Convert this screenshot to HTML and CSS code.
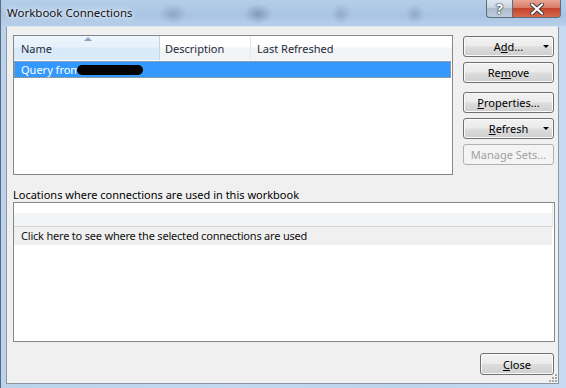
FILE: index.html
```html
<!DOCTYPE html>
<html lang="en">
  <head>
    <meta charset="UTF-8" />
    <title>Workbook Connections</title>
    <link rel="stylesheet" href="styles.css">
  </head>
  <body>
    <div class="window">
      <div class="titlebar">
        <span class="title">Workbook Connections</span>
        <div class="caption-buttons">
          <div class="cap cap-help">?</div>
          <div class="cap cap-close">
            <svg width="14" height="12" viewBox="0 0 14 12">
              <path d="M2 1.5 L12 10.5 M12 1.5 L2 10.5" stroke="#3b3b3b" stroke-width="4" stroke-linecap="round" />
              <path d="M2 1.5 L12 10.5 M12 1.5 L2 10.5" stroke="#ffffff" stroke-width="2.2" stroke-linecap="round" />
            </svg>
          </div>
        </div>
      </div>
      <div class="client">
        <div class="top-row">
          <div class="conn-list">
            <div class="list-header">
              <div class="col col-name">Name<span class="sort-arrow"></span></div>
              <div class="col col-desc">Description</div>
              <div class="col col-refreshed">Last Refreshed</div>
            </div>
            <div class="list-row selected">Query from <span class="redact"></span></div>
          </div>
          <div class="side-buttons">
            <div class="btn split"><span class="btn-label">A<u>d</u>d...</span><span class="arrow"></span></div>
            <div class="btn">Re<u>m</u>ove</div>
            <div class="btn spaced"><u>P</u>roperties...</div>
            <div class="btn split"><span class="btn-label"><u>R</u>efresh</span><span class="arrow"></span></div>
            <div class="btn disabled">Manage Sets...</div>
          </div>
        </div>
        <div class="section-label">Locations where connections are used in this workbook</div>
        <div class="loc-list">
          <div class="loc-header"></div>
          <div class="loc-row">Click here to see where the selected connections are used</div>
        </div>
        <div class="footer">
          <div class="btn close-btn"><u>C</u>lose</div>
        </div>
        <svg class="grip" width="10" height="10" viewBox="0 0 10 10">
          <g fill="#a8a8a8">
            <rect x="8" y="2" width="2" height="2" />
            <rect x="5" y="5" width="2" height="2" />
            <rect x="8" y="5" width="2" height="2" />
            <rect x="2" y="8" width="2" height="2" />
            <rect x="5" y="8" width="2" height="2" />
            <rect x="8" y="8" width="2" height="2" />
          </g>
        </svg>
      </div>
    </div>
  </body>
</html>
```

FILE: styles.css
```css
* {
  margin: 0;
  padding: 0;
  box-sizing: border-box;
}
body {
  background-color: #bfd6ef;
  font-family: "Noto Sans", sans-serif;
  font-size: 11px;
  color: #000;
}
.window {
  width: 566px;
  height: 388px;
  display: flex;
  flex-direction: column;
  background: linear-gradient(90deg, #bad2ec 0%, #c3d8ef 40%, #bcd3ec 70%, #c6dbf1 100%);
  border-left: 1px solid #5a6a7c;
}
.titlebar {
  height: 26px;
  display: flex;
  align-items: flex-start;
  background:
    radial-gradient(ellipse 14px 10px at 172px 14px, rgba(90, 110, 140, 0.35), transparent),
    radial-gradient(ellipse 14px 10px at 257px 14px, rgba(70, 90, 120, 0.4), transparent),
    radial-gradient(ellipse 10px 10px at 340px 14px, rgba(90, 110, 140, 0.3), transparent),
    radial-gradient(ellipse 10px 10px at 414px 14px, rgba(90, 110, 140, 0.3), transparent),
    linear-gradient(180deg, #b4cde8 0%, #a9c4e3 60%, #b7cfea 100%);
}
.title {
  padding: 5px 0 0 6px;
  line-height: 16px;
  font-size: 11.5px;
  color: #111;
  text-shadow: 0 0 6px #e3eefa, 0 0 10px #e3eefa, 0 0 3px #eef5fc;
}
.caption-buttons {
  display: flex;
  margin-left: auto;
  margin-right: 5px;
}
.cap {
  height: 18px;
  display: flex;
  align-items: center;
  justify-content: center;
  border: 1px solid #5d6d7e;
  border-top: none;
}
.cap-help {
  width: 26px;
  border-right: none;
  border-radius: 0 0 0 4px;
  background: linear-gradient(180deg, #dfe8f2 0%, #c7d4e2 45%, #aebdcd 50%, #bcccdc 100%);
  color: #fff;
  font-weight: bold;
  font-size: 14px;
  line-height: 16px;
  text-shadow: 0 0 1px #333, 0 0 1px #333, 0 0 2px #444;
}
.cap-close {
  width: 49px;
  border-radius: 0 0 4px 0;
  background: linear-gradient(180deg, #e7a595 0%, #d87b66 45%, #c4432c 50%, #d66a4d 100%);
}
.client {
  position: relative;
  width: 553px;
  height: 358px;
  margin-left: 5px;
  background-color: #f0f0f0;
  border: 1px solid #8c97a3;
  border-top-color: #dfe6ee;
  padding: 8px 3px 8px 6px;
  display: flex;
  flex-direction: column;
}
.top-row {
  display: flex;
  gap: 10px;
  height: 140px;
}
.conn-list {
  width: 440px;
  height: 140px;
  border: 1px solid #828790;
  background-color: #fff;
}
.list-header {
  display: flex;
  height: 24px;
  background: linear-gradient(180deg, #ffffff 0%, #ffffff 45%, #f3f4f6 50%, #f2f3f5 100%);
}
.col {
  position: relative;
  border-right: 1px solid #e3e8ee;
  padding: 5px 0 0 7px;
  color: #1e2a38;
  line-height: 15px;
}
.col-name {
  width: 146px;
  background: linear-gradient(180deg, #edf5fc 0%, #e6f1fb 45%, #daeaf8 50%, #d9e9f8 100%);
  border-right-color: #bcd7ee;
}
.sort-arrow {
  position: absolute;
  left: 70px;
  top: 1px;
  border-left: 4px solid transparent;
  border-right: 4px solid transparent;
  border-bottom: 4px solid #8aa4bf;
}
.col-desc {
  width: 91px;
  padding-left: 5px;
}
.col-refreshed {
  flex: 1;
  border-right: none;
  padding-left: 6px;
}
.list-row {
  height: 17px;
  margin: 1px 1px 0 0;
  padding-left: 6px;
  line-height: 15px;
  display: flex;
  align-items: center;
}
.selected {
  background-color: #3399ff;
  color: #fff;
  border: 1px dotted #d8a060;
}
.redact {
  display: inline-block;
  width: 66px;
  height: 10px;
  margin-left: -4px;
  background-color: #000;
  border-radius: 5px;
}
.side-buttons {
  display: flex;
  flex-direction: column;
  gap: 5px;
  width: 91px;
  padding-top: 1px;
}
.btn {
  height: 21px;
  border: 1px solid #707070;
  border-radius: 3px;
  background: linear-gradient(180deg, #f2f2f2 0%, #ebebeb 48%, #dddddd 52%, #cfcfcf 100%);
  box-shadow: inset 0 0 0 1px #fafafa;
  display: flex;
  align-items: center;
  justify-content: center;
  line-height: 15px;
  color: #000;
}
.split {
  display: grid;
  grid-template-columns: 1fr auto 1fr;
  align-items: center;
}
.btn-label {
  grid-column: 2;
}
.arrow {
  grid-column: 3;
  justify-self: end;
  margin-right: 4px;
  border-left: 3px solid transparent;
  border-right: 3px solid transparent;
  border-top: 3px solid #000;
}
.spaced {
  margin-top: 4px;
}
.disabled {
  border-color: #adb2b5;
  background: #f4f4f4;
  box-shadow: none;
  color: #a0a0a0;
}
.section-label {
  margin-top: 12px;
  line-height: 15px;
  height: 15px;
  margin-bottom: 0;
}
.loc-list {
  width: 542px;
  height: 140px;
  border: 1px solid #828790;
  background-color: #fff;
}
.loc-header {
  height: 24px;
  margin-right: 1px;
  border-right: 1px solid #e3e8ee;
  border-bottom: 1px solid #d5d5d5;
  background: linear-gradient(180deg, #ffffff 0%, #ffffff 42%, #f3f4f6 45%, #f2f3f5 100%);
}
.loc-row {
  height: 18px;
  margin-right: 2px;
  padding-left: 7px;
  line-height: 18px;
  letter-spacing: -0.2px;
  background-color: #f0f0f0;
  color: #111;
}
.footer {
  display: flex;
  justify-content: flex-end;
  margin-top: 11px;
  padding-right: 1px;
}
.close-btn {
  width: 74px;
  height: 22px;
}
.grip {
  position: absolute;
  right: 1px;
  bottom: 1px;
}
```
